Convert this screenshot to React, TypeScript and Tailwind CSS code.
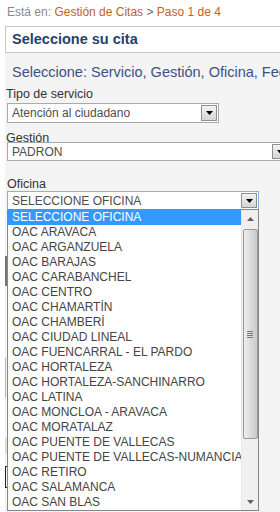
import React from 'react';

const OFICINAS = [
  'SELECCIONE OFICINA',
  'OAC ARAVACA',
  'OAC ARGANZUELA',
  'OAC BARAJAS',
  'OAC CARABANCHEL',
  'OAC CENTRO',
  'OAC CHAMARTÍN',
  'OAC CHAMBERÍ',
  'OAC CIUDAD LINEAL',
  'OAC FUENCARRAL - EL PARDO',
  'OAC HORTALEZA',
  'OAC HORTALEZA-SANCHINARRO',
  'OAC LATINA',
  'OAC MONCLOA - ARAVACA',
  'OAC MORATALAZ',
  'OAC PUENTE DE VALLECAS',
  'OAC PUENTE DE VALLECAS-NUMANCIA',
  'OAC RETIRO',
  'OAC SALAMANCA',
  'OAC SAN BLAS',
];

const font = { fontFamily: '"Liberation Sans", Arial, sans-serif' };

const Caret = () => (
  <svg width="7" height="4" viewBox="0 0 7 4">
    <path d="M0 0h7L3.5 4z" fill="#000" />
  </svg>
);

// old Windows-style select: white field + grey bevelled button
const SelectBox = ({
  value,
  className,
  focused,
}: {
  value: string;
  className: string;
  focused?: boolean;
}) => (
  <div
    className={`flex items-stretch bg-white border ${
      focused ? 'border-[#7eb4ea]' : 'border-[#a9a9a9]'
    } ${className}`}
  >
    <div className="flex-1 min-w-0 pl-[4px] flex items-center text-[12px] text-[#4d4d4d] whitespace-nowrap overflow-hidden">
      {value}
    </div>
    <div className="w-[16px] m-px border border-[#8e8f8f] bg-gradient-to-b from-[#f2f2f2] to-[#d5d5d5] flex items-center justify-center">
      <Caret />
    </div>
  </div>
);

export default function App() {
  return (
    <div className="w-[280px] h-[512px] overflow-hidden bg-white relative" style={font}>
      {/* Breadcrumb */}
      <div className="pl-[7px] pt-[5px] h-[26px] text-[12px] leading-[14px] whitespace-nowrap">
        <span className="text-[#8a8a8a]">Está en: </span>
        <span className="text-[#c0622b]">Gestión de Citas</span>
        <span className="text-[#666]"> &gt; </span>
        <span className="text-[#c0622b]">Paso 1 de 4</span>
      </div>

      <div className="pl-[5px]">
        <div className="w-[300px] h-[27px] border border-[#c8c8c8] bg-white flex items-center pl-[6px]">
          <span className="text-[14.5px] font-bold text-[#283f6e]">Seleccione su cita</span>
        </div>

        <div className="bg-[#f4f4f4] h-[480px] flex flex-col">
          <div className="pl-[7px] pt-[10px] h-[28px] text-[14.5px] leading-[18px] text-[#3c5283] whitespace-nowrap">
            Seleccione: Servicio, Gestión, Oficina, Fecha y hora
          </div>

          <div className="mt-[7px] text-[12.5px] leading-[12px] text-[#333] pl-px">Tipo de servicio</div>
          <SelectBox value="Atención al ciudadano" className="ml-[2px] mt-[3px] w-[212px] h-[20px] shrink-0" />

          <div className="mt-[9px] text-[12.5px] leading-[12px] text-[#333] pl-px">Gestión</div>
          <SelectBox value="PADRON" className="ml-[2px] -mt-[2px] w-[283px] h-[19px] shrink-0" />

          <div className="mt-[17px] text-[12.5px] leading-[12px] text-[#333] pl-[2px]">Oficina</div>
          <SelectBox value="SELECCIONE OFICINA" focused className="ml-[2px] mt-px w-[252px] h-[19px] shrink-0" />

          {/* content lying under the open list, only its left edge shows */}
          <div className="mt-[46px] w-[200px] h-[30px] border-l-2 border-[#777] shrink-0" />
          <div className="mt-[72px] w-[200px] h-[40px] border-l border-[#b8b8b8] shrink-0" />
          <div className="mt-[40px] w-[200px] h-[16px] border-l-2 border-[#cfe5d4] shrink-0" />
          <div className="mt-[12px] w-[200px] h-[22px] border border-[#222] shrink-0" />
        </div>
      </div>

      {/* Open option list */}
      <div className="absolute left-[7px] top-[209px] w-[252px] h-[302px] bg-white border border-[#828790] flex">
        <div className="flex-1 min-w-0">
          {OFICINAS.map((o, i) => (
            <div
              key={o}
              className={`h-[15px] pl-[4px] text-[12px] leading-[15px] whitespace-nowrap overflow-hidden ${
                i === 0 ? 'bg-[#3399ff] text-white' : 'text-[#444]'
              }`}
            >
              {o}
            </div>
          ))}
        </div>
        {/* scrollbar */}
        <div className="w-[17px] bg-[#f0f0f0] flex flex-col items-center border-l border-[#e8e8e8]">
          <div className="h-[17px] flex items-center justify-center">
            <svg width="7" height="4" viewBox="0 0 7 4">
              <path d="M0 4h7L3.5 0z" fill="#606060" />
            </svg>
          </div>
          <div className="w-[15px] h-[210px] mt-[2px] rounded-[2px] border border-[#979797] bg-gradient-to-r from-[#eeeeee] via-[#dcdcdc] to-[#c9c9c9] flex items-center justify-center">
            <div className="flex flex-col gap-[1px]">
              <div className="w-[6px] h-px bg-[#777]" />
              <div className="w-[6px] h-px bg-[#777]" />
              <div className="w-[6px] h-px bg-[#777]" />
              <div className="w-[6px] h-px bg-[#777]" />
            </div>
          </div>
          <div className="flex-1" />
          <div className="h-[17px] flex items-center justify-center">
            <svg width="7" height="4" viewBox="0 0 7 4">
              <path d="M0 0h7L3.5 4z" fill="#606060" />
            </svg>
          </div>
        </div>
      </div>
    </div>
  );
}
